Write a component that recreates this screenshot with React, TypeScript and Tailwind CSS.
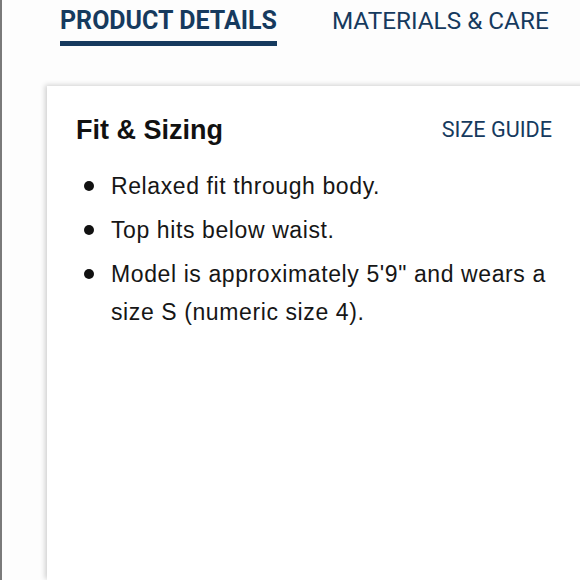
import React from "react";

const items = [
  "Relaxed fit through body.",
  "Top hits below waist.",
  "Model is approximately 5'9\" and wears a size S (numeric size 4).",
];

export default function App() {
  return (
    <div className="w-[580px] h-[580px] overflow-hidden bg-[#fdfdfd] border-l-2 border-[#7a7a7a] flex flex-col">
      {/* Tabs */}
      <div className="flex gap-[55px] pl-[58px] pt-[6px] font-['Roboto',sans-serif] text-[#163a5e]">
        <div className="flex flex-col">
          <span className="font-bold text-[25px] leading-[30px]">PRODUCT DETAILS</span>
          <span className="mt-[5px] h-[5px] bg-[#163a5e]" />
        </div>
        <span className="text-[24.3px] leading-[30px]">MATERIALS &amp; CARE</span>
      </div>

      {/* Card */}
      <div className="ml-[45px] mt-[40px] -mr-[20px] flex-1 bg-white shadow-[-2px_-1px_5px_rgba(0,0,0,0.18)] pl-[29px] pr-[40px] pt-[24px] font-['Liberation_Sans','Arial',sans-serif]">
        <div className="flex items-center justify-between pr-[8px]">
          <h2 className="text-[27px] font-bold text-[#111]">Fit &amp; Sizing</h2>
          <span className="font-['Roboto',sans-serif] text-[21.6px] text-[#163a5e]">SIZE GUIDE</span>
        </div>
        <ul className="mt-[16px] flex flex-col gap-[6px] text-[23px] leading-[38px] tracking-[0.6px] text-[#161616]">
          {items.map((t) => (
            <li key={t} className="flex">
              <span className="w-[35px] shrink-0 flex pt-[14px] pl-[8px]">
                <span className="w-[10px] h-[10px] rounded-full bg-[#111]" />
              </span>
              <span>{t}</span>
            </li>
          ))}
        </ul>
      </div>
    </div>
  );
}
